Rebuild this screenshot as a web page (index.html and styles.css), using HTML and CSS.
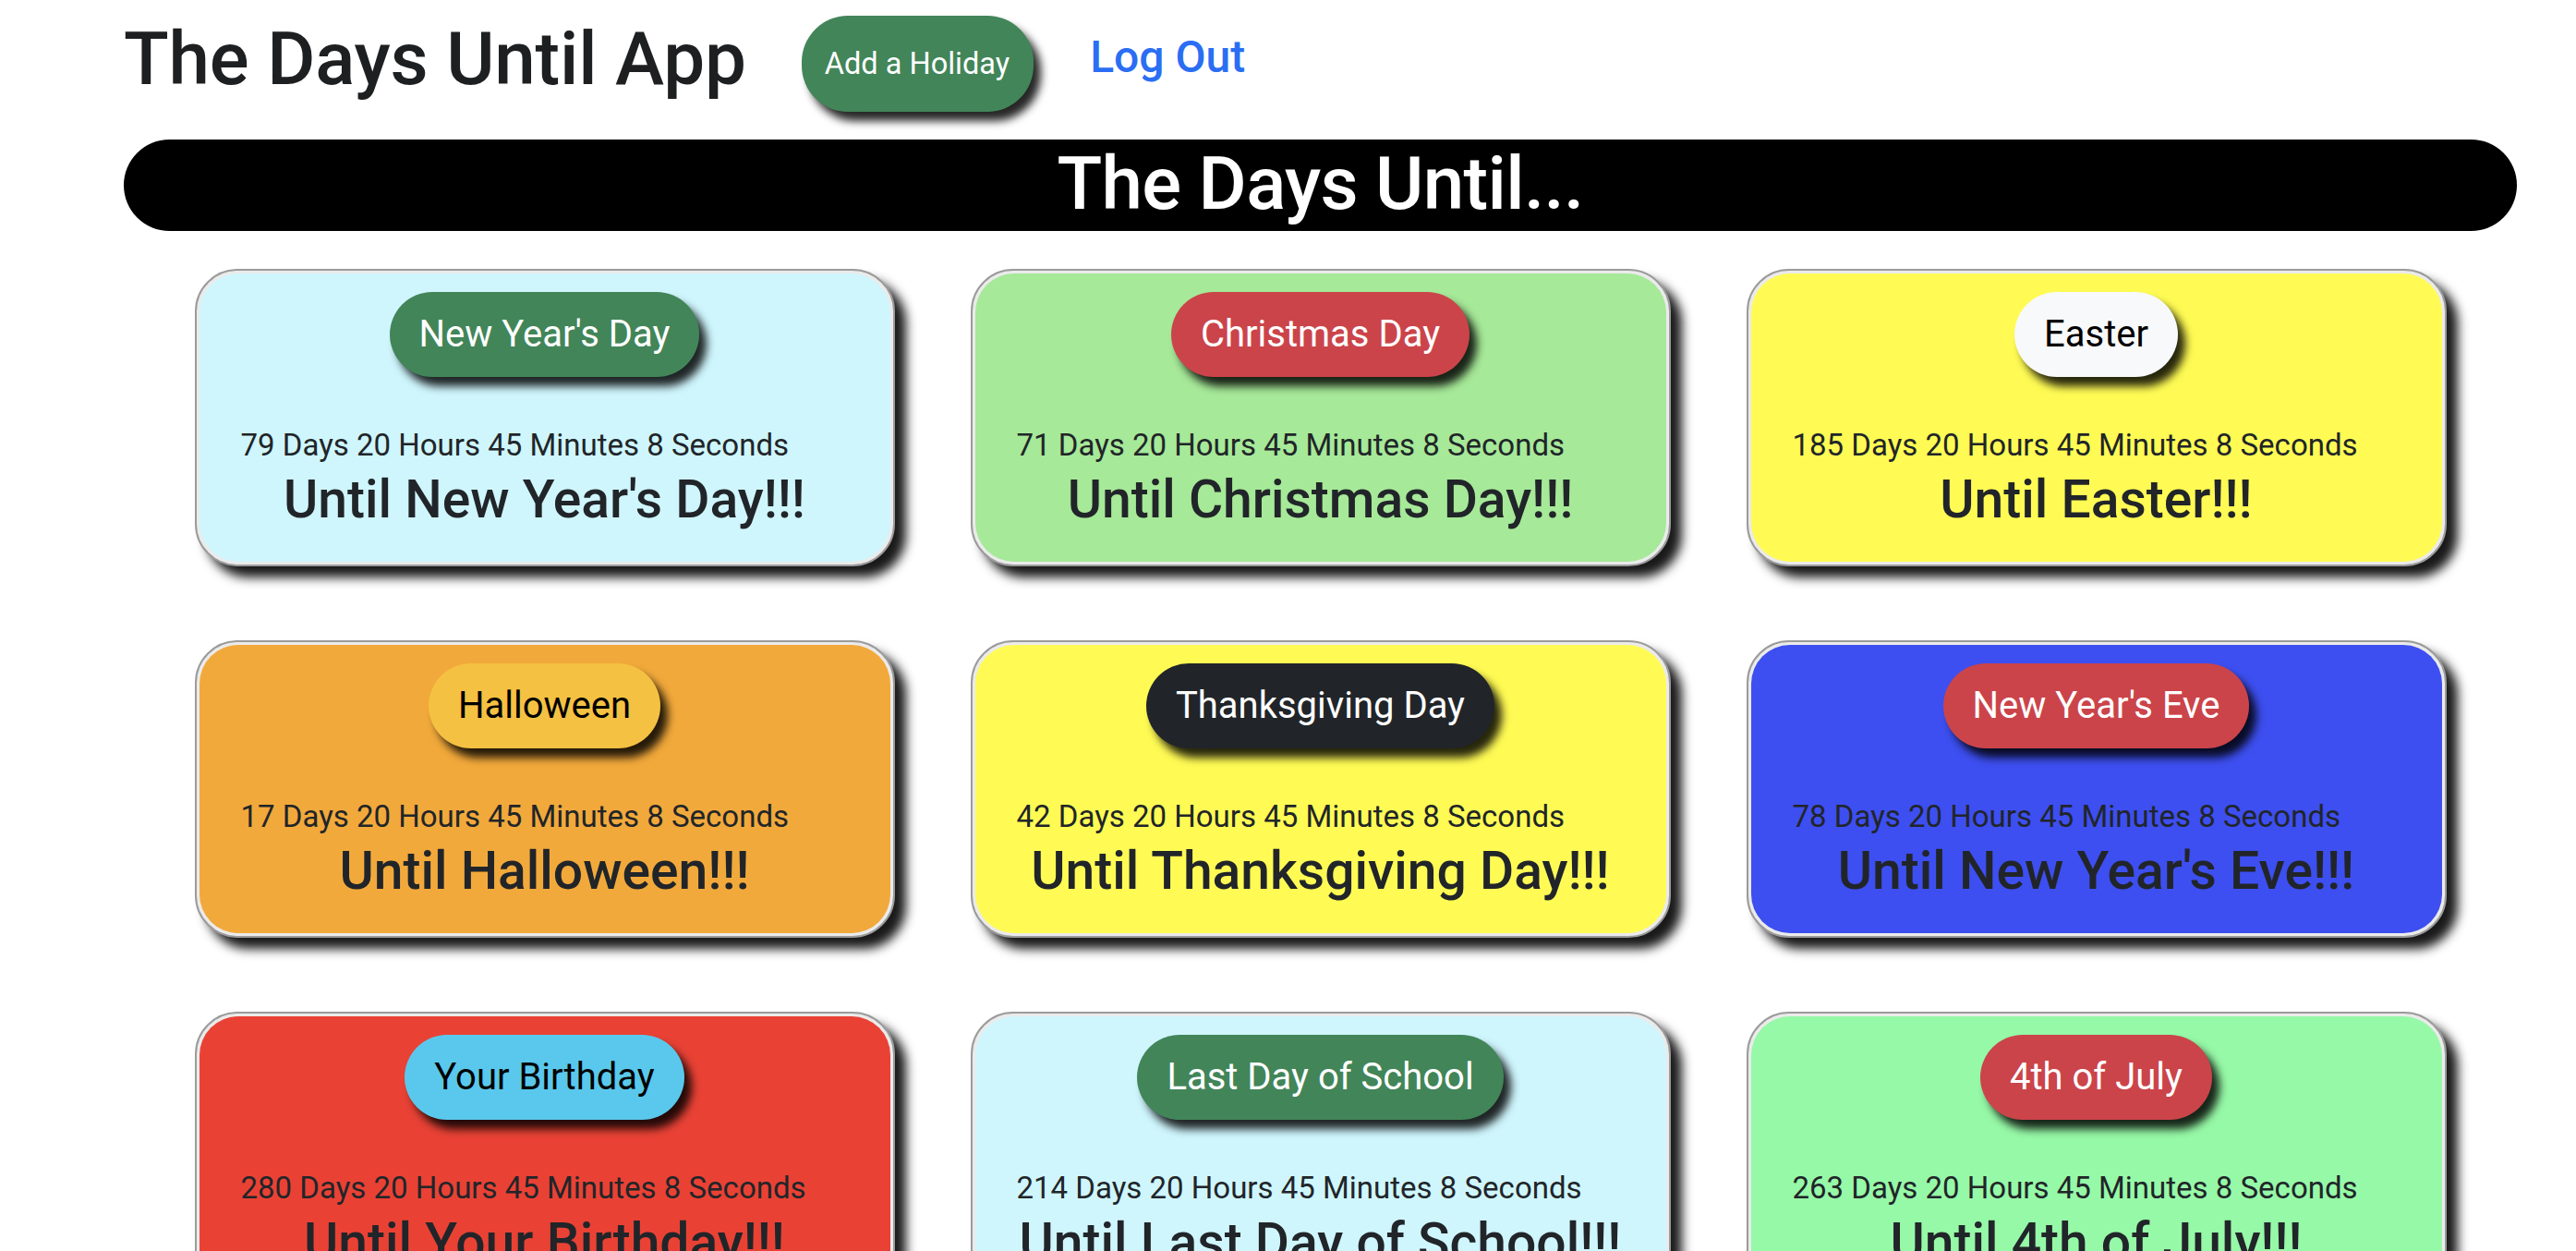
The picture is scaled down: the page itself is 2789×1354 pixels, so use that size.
FILE: index.html
```html
<!DOCTYPE html>
<html lang="en">
<head>
<meta charset="utf-8">
<title>The Days Until App</title>
<link rel="stylesheet" href="styles.css">
</head>
<body>
<div class="page">
  <header class="topbar">
    <h1 class="app-title">The Days Until App</h1>
    <a class="btn-add" href="#">Add a Holiday</a>
    <a class="logout" href="#">Log Out</a>
  </header>
  <h1 class="banner">The Days Until...</h1>
  <main class="grid">
    <div class="card bg-cyan"><div class="card-body">
      <span class="pill p-green">New Year's Day</span>
      <p class="count">79 Days 20 Hours 45 Minutes 8 Seconds</p>
      <h3 class="until">Until New Year's Day!!!</h3>
    </div></div>
    <div class="card bg-lgreen"><div class="card-body">
      <span class="pill p-red">Christmas Day</span>
      <p class="count">71 Days 20 Hours 45 Minutes 8 Seconds</p>
      <h3 class="until">Until Christmas Day!!!</h3>
    </div></div>
    <div class="card bg-yellow"><div class="card-body">
      <span class="pill p-light">Easter</span>
      <p class="count">185 Days 20 Hours 45 Minutes 8 Seconds</p>
      <h3 class="until">Until Easter!!!</h3>
    </div></div>
    <div class="card bg-orange"><div class="card-body">
      <span class="pill p-warning">Halloween</span>
      <p class="count">17 Days 20 Hours 45 Minutes 8 Seconds</p>
      <h3 class="until">Until Halloween!!!</h3>
    </div></div>
    <div class="card bg-yellow"><div class="card-body">
      <span class="pill p-dark">Thanksgiving Day</span>
      <p class="count">42 Days 20 Hours 45 Minutes 8 Seconds</p>
      <h3 class="until">Until Thanksgiving Day!!!</h3>
    </div></div>
    <div class="card bg-blue"><div class="card-body">
      <span class="pill p-red">New Year's Eve</span>
      <p class="count">78 Days 20 Hours 45 Minutes 8 Seconds</p>
      <h3 class="until">Until New Year's Eve!!!</h3>
    </div></div>
    <div class="card bg-red"><div class="card-body">
      <span class="pill p-info">Your Birthday</span>
      <p class="count">280 Days 20 Hours 45 Minutes 8 Seconds</p>
      <h3 class="until">Until Your Birthday!!!</h3>
    </div></div>
    <div class="card bg-cyan"><div class="card-body">
      <span class="pill p-green">Last Day of School</span>
      <p class="count">214 Days 20 Hours 45 Minutes 8 Seconds</p>
      <h3 class="until">Until Last Day of School!!!</h3>
    </div></div>
    <div class="card bg-mint"><div class="card-body">
      <span class="pill p-red">4th of July</span>
      <p class="count">263 Days 20 Hours 45 Minutes 8 Seconds</p>
      <h3 class="until">Until 4th of July!!!</h3>
    </div></div>
  </main>
</div>
</body>
</html>
```
FILE: styles.css
```css
html, body {
  margin: 0;
  background: #ffffff;
}

body {
  font-family: Roboto, "Liberation Sans", Arial, sans-serif;
  color: #212529;
}

.page {
  padding: 16px 64px 0 134px;
}

.topbar {
  display: flex;
  align-items: flex-start;
  gap: 60px;
}

.app-title {
  margin: 0;
  font-size: 80px;
  font-weight: 500;
  line-height: 96px;
  letter-spacing: -0.2px;
  color: #1d1f21;
}

.btn-add {
  margin-top: 1px;
  padding: 28px 26px 28px 25px;
  font-size: 32.5px;
  line-height: 48px;
  background: #428559;
  color: #ffffff;
  text-decoration: none;
  border-radius: 50px;
  box-shadow: 8px 10px 10px rgba(0, 0, 0, 0.85);
}

.logout {
  margin-top: 10px;
  margin-left: 1px;
  font-size: 48px;
  font-weight: 500;
  line-height: 72px;
  letter-spacing: 0;
  color: #2a6ef3;
  text-decoration: none;
}

.banner {
  margin: 30px 0 0;
  padding: 0 0 3px;
  background: #000000;
  color: #ffffff;
  text-align: center;
  font-size: 80px;
  font-weight: 500;
  line-height: 96px;
  letter-spacing: -0.7px;
  border-radius: 50px;
}

.grid {
  display: grid;
  grid-template-columns: repeat(3, 758px);
  gap: 80px 82px;
  justify-content: center;
  margin-top: 41px;
}

.card {
  height: 322px;
  box-sizing: border-box;
  border: 2px solid #9b9b9b;
  padding: 3px;
  background: #ebebeb;
  border-radius: 46px;
  box-shadow: 12px 12px 12px rgba(0, 0, 0, 0.9);
}

.card-body {
  height: 100%;
  box-sizing: border-box;
  border-radius: 42px;
  padding: 20px 45px 0;
  text-align: center;
}

.pill {
  display: block;
  width: fit-content;
  margin: 0 auto;
  padding: 16px 32px;
  font-size: 40px;
  line-height: 60px;
  border-radius: 46px;
  box-shadow: 8px 10px 10px rgba(0, 0, 0, 0.85);
}

.count {
  margin: 49px 0 0;
  text-align: left;
  font-size: 33px;
  line-height: 49.5px;
}

.until {
  margin: 0;
  font-size: 57px;
  font-weight: 500;
  line-height: 68px;
}

/* card colours */
.bg-cyan .card-body { background: #cff6fd; }
.bg-lgreen .card-body { background: #a6e998; }
.bg-yellow .card-body { background: #fffb54; }
.bg-orange .card-body { background: #f2a93b; }
.bg-blue .card-body { background: #3d4ff0; }
.bg-red .card-body { background: #e94235; }
.bg-mint .card-body { background: #96f9a7; }

/* pill colours */
.p-green { background: #428559; color: #ffffff; }
.p-red { background: #cb444a; color: #ffffff; }
.p-light { background: #f8f9fa; color: #000000; }
.p-warning { background: #f5c142; color: #000000; }
.p-dark { background: #212529; color: #ffffff; }
.p-info { background: #5ac8ec; color: #000000; }
```
